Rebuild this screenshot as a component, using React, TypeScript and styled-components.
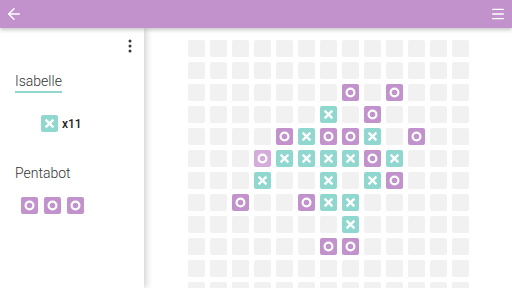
import React from 'react';
import styled, { createGlobalStyle } from 'styled-components';
import { ArrowLeft, Menu } from 'lucide-react';

const PURPLE = '#c192cb';
const TEAL = '#90d8cf';

const GlobalStyle = createGlobalStyle`
  html, body {
    margin: 0;
    padding: 0;
    background: #ffffff;
    font-family: Roboto, "Liberation Sans", sans-serif;
  }
  * {
    box-sizing: border-box;
  }
`;

const Screen = styled.div`
  width: 512px;
  height: 288px;
  display: flex;
  flex-direction: column;
  overflow: hidden;
`;

const TopBar = styled.div`
  height: 28px;
  flex-shrink: 0;
  background: ${PURPLE};
  display: flex;
  align-items: center;
  justify-content: space-between;
  padding: 0 6px 0 5px;
  color: #ffffff;
  box-shadow: 0 2px 4px rgba(0, 0, 0, 0.22);
  position: relative;
  z-index: 2;
`;

const IconButton = styled.div`
  display: flex;
  align-items: center;
  justify-content: center;
`;

const Body = styled.div`
  flex: 1;
  display: flex;
  min-height: 0;
`;

const Sidebar = styled.div`
  width: 144px;
  flex-shrink: 0;
  background: #ffffff;
  box-shadow: 2px 0 7px rgba(0, 0, 0, 0.2);
  position: relative;
  z-index: 1;
  padding: 11px 0 0 15px;
  display: flex;
  flex-direction: column;
`;

const MoreRow = styled.div`
  display: flex;
  justify-content: flex-end;
  padding-right: 12px;
  height: 14px;
`;

const Player = styled.div<{ top: number }>`
  margin-top: ${({ top }) => top}px;
  display: flex;
  flex-direction: column;
  align-items: flex-start;
`;

const Name = styled.div<{ active?: boolean }>`
  font-size: 14px;
  font-weight: 300;
  line-height: 16px;
  color: #333333;
  padding-bottom: 2px;
  border-bottom: 2px solid ${({ active }) => (active ? TEAL : 'transparent')};
`;

const Captures = styled.div<{ indent: number; top: number }>`
  display: flex;
  align-items: center;
  gap: 6px;
  margin-left: ${({ indent }) => indent}px;
  margin-top: ${({ top }) => top}px;
`;

const Count = styled.span`
  font-size: 12px;
  font-weight: 500;
  color: #222222;
  margin-left: -2px;
`;

const BoardArea = styled.div`
  flex: 1;
  background: #ffffff;
  padding: 12px 0 0 44px;
  overflow: hidden;
`;

const Grid = styled.div`
  display: grid;
  grid-template-columns: repeat(13, 17px);
  grid-auto-rows: 17px;
  gap: 5px;
`;

const Cell = styled.div<{ kind: string }>`
  width: 17px;
  height: 17px;
  border-radius: 2px;
  display: flex;
  align-items: center;
  justify-content: center;
  background: ${({ kind }) =>
    kind === 'X' ? TEAL : kind === 'O' ? PURPLE : kind === 'o' ? '#d5abdc' : '#f1f1f1'};
`;

const board = [
  '.............',
  '.............',
  '.......O.O...',
  '......X.O....',
  '....OXOOX.O..',
  '...oXXXXOX...',
  '...X..X.XO...',
  '..O..OXX.....',
  '.......X.....',
  '......OO.....',
  '.............',
  '.............',
];

const Mark = ({ kind }: { kind: string }) => {
  if (kind === 'X') {
    return (
      <svg width="17" height="17" viewBox="0 0 17 17">
        <path d="M4.6 4.6 L12.4 12.4 M12.4 4.6 L4.6 12.4" stroke="#fff" strokeWidth="2.3" />
      </svg>
    );
  }
  if (kind === 'O' || kind === 'o') {
    return (
      <svg width="17" height="17" viewBox="0 0 17 17">
        <circle cx="8.5" cy="8.5" r="3.9" fill="none" stroke="#fff" strokeWidth="2.2" />
      </svg>
    );
  }
  return null;
};

const Piece = ({ kind }: { kind: string }) => (
  <Cell kind={kind}>
    <Mark kind={kind} />
  </Cell>
);

const MoreDots = () => (
  <svg width="4" height="14" viewBox="0 0 4 14">
    <circle cx="2" cy="2" r="1.5" fill="#3a3a3a" />
    <circle cx="2" cy="7" r="1.5" fill="#3a3a3a" />
    <circle cx="2" cy="12" r="1.5" fill="#3a3a3a" />
  </svg>
);

export default function App() {
  return (
    <Screen>
      <GlobalStyle />
      <TopBar>
        <IconButton>
          <ArrowLeft size={18} strokeWidth={2} />
        </IconButton>
        <IconButton>
          <Menu size={16} strokeWidth={2} />
        </IconButton>
      </TopBar>
      <Body>
        <Sidebar>
          <MoreRow>
            <MoreDots />
          </MoreRow>
          <Player top={20}>
            <Name active>Isabelle</Name>
            <Captures indent={26} top={22}>
              <Piece kind="X" />
              <Count>x11</Count>
            </Captures>
          </Player>
          <Player top={33}>
            <Name>Pentabot</Name>
            <Captures indent={6} top={12}>
              <Piece kind="O" />
              <Piece kind="O" />
              <Piece kind="O" />
            </Captures>
          </Player>
        </Sidebar>
        <BoardArea>
          <Grid>
            {board.flatMap((row, r) =>
              row.split('').map((k, c) => <Piece key={`${r}-${c}`} kind={k} />)
            )}
          </Grid>
        </BoardArea>
      </Body>
    </Screen>
  );
}
